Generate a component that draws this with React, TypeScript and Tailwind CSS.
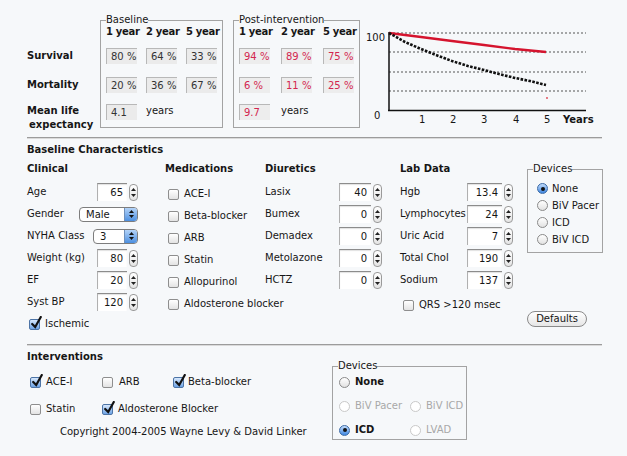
import React from "react";

function Checkbox({ checked = false }: { checked?: boolean }) {
  return (
    <span
      className={
        checked
          ? "relative shrink-0 inline-block w-[11px] h-[11px] rounded-[2px] border border-[#4d74a6] bg-linear-to-b from-[#d7e8fc] to-[#6ea3e4]"
          : "relative shrink-0 inline-block w-[11px] h-[11px] rounded-[2px] border border-[#8e8e8e] bg-linear-to-b from-white to-[#e3e3e3]"
      }
    >
      {checked && (
        <svg className="absolute left-[1px] top-[-4px]" width="11" height="13" viewBox="0 0 11 13">
          <path d="M1.2 8 L4.2 11 L9.8 1" stroke="#111" strokeWidth="2.2" fill="none" strokeLinecap="round" />
        </svg>
      )}
    </span>
  );
}

function Radio({ on = false, disabled = false }: { on?: boolean; disabled?: boolean }) {
  if (on)
    return (
      <span className="shrink-0 flex items-center justify-center w-[11px] h-[11px] rounded-full border border-[#3b6aa6] bg-linear-to-b from-[#c3dcfb] to-[#3c86e0]">
        <span className="w-[4px] h-[4px] rounded-full bg-[#111]" />
      </span>
    );
  if (disabled)
    return <span className="shrink-0 w-[11px] h-[11px] rounded-full border border-[#c9c9c9] bg-white" />;
  return <span className="shrink-0 w-[11px] h-[11px] rounded-full border border-[#8a8a8a] bg-linear-to-b from-white to-[#e2e2e2]" />;
}

function Stepper() {
  return (
    <span className="shrink-0 flex flex-col items-center justify-center gap-[3px] w-[9px] h-[17px] rounded-[4px] border border-[#9a9a9a] bg-linear-to-b from-white to-[#e4e4e4]">
      <svg width="5" height="3" viewBox="0 0 5 3">
        <path d="M0 3 L2.5 0 L5 3Z" fill="#222" />
      </svg>
      <svg width="5" height="3" viewBox="0 0 5 3">
        <path d="M0 0 L2.5 3 L5 0Z" fill="#222" />
      </svg>
    </span>
  );
}

function Spin({ value, w }: { value: string; w: string }) {
  return (
    <div className="flex items-center gap-[2px]">
      <span
        className={`${w} h-[18px] leading-[17px] text-right pr-[4px] bg-white border-t border-l border-t-[#8c8c8c] border-l-[#b0b0b0] shadow-[inset_0_1px_1px_rgba(0,0,0,0.12)]`}
      >
        {value}
      </span>
      <Stepper />
    </div>
  );
}

function Select({ value, w }: { value: string; w: string }) {
  return (
    <div className={`${w} flex h-[15px] rounded-[4px] border border-[#7d7d7d] bg-white overflow-hidden`}>
      <span className="flex-1 pl-[6px] leading-[13px]">{value}</span>
      <span className="w-[13px] flex flex-col items-center justify-center gap-[2px] bg-linear-to-b from-[#b3d3f8] to-[#4b8fe0] border-l border-[#6e8fba]">
        <svg width="5" height="3" viewBox="0 0 5 3">
          <path d="M0 3 L2.5 0 L5 3Z" fill="#111" />
        </svg>
        <svg width="5" height="3" viewBox="0 0 5 3">
          <path d="M0 0 L2.5 3 L5 0Z" fill="#111" />
        </svg>
      </span>
    </div>
  );
}

function Val({ v, red = false }: { v: string; red?: boolean }) {
  return (
    <span
      className={
        red
          ? "h-[16px] leading-[16px] pl-[4px] bg-[#ededed] border-t border-l border-[#b8b8b8] text-[#d3264f]"
          : "h-[16px] leading-[16px] pl-[4px] bg-[#ebebeb] border-t border-l border-[#b8b8b8] text-[#333]"
      }
    >
      {v}
    </span>
  );
}

function ResultBox({
  title,
  surv,
  mort,
  life,
  red = false,
  cols,
}: {
  title: string;
  surv: string[];
  mort: string[];
  life: string;
  red?: boolean;
  cols: string;
}) {
  return (
    <fieldset className="shrink-0 border border-[#a3a3a3] px-[5px] pb-[7px]">
      <legend className="leading-[12px]">{title}</legend>
      <div className={`grid ${cols} font-bold leading-[12px] tracking-[-0.3px] whitespace-nowrap`}>
        <span>1 year</span>
        <span>2 year</span>
        <span>5 year</span>
      </div>
      <div className={`mt-[10px] grid ${cols}`}>
        {surv.map((s) => (
          <Val key={s} v={s} red={red} />
        ))}
      </div>
      <div className={`mt-[13px] grid ${cols}`}>
        {mort.map((s) => (
          <Val key={s} v={s} red={red} />
        ))}
      </div>
      <div className={`mt-[11px] grid ${cols}`}>
        <Val v={life} red={red} />
        <span className="leading-[14px]">years</span>
      </div>
    </fieldset>
  );
}

function Chart() {
  const red = "29,19 61,23 92,27 124,31 155,35 186,38";
  const black = "29,19 45,28 61,35 76,41 92,47 108,52 124,56 139,60 155,64 170,67 186,71";
  return (
    <svg width="240" height="114" viewBox="0 0 240 114" className="shrink-0">
      {[19, 38, 58, 77].map((y) => (
        <line key={y} x1="29" y1={y} x2="226" y2={y} stroke="#555" strokeWidth="1" strokeDasharray="2 2" />
      ))}
      <line x1="29" y1="18" x2="29" y2="97" stroke="#111" strokeWidth="1.5" />
      <line x1="28" y1="96.5" x2="226" y2="96.5" stroke="#111" strokeWidth="1.5" />
      <polyline points={red} fill="none" stroke="#d5142e" strokeWidth="2.4" />
      <polyline points={black} fill="none" stroke="#111" strokeWidth="2.6" strokeDasharray="2.6 1.4" />
      <circle cx="187" cy="84" r="0.9" fill="#e04050" />
      <g fontFamily="'DejaVu Sans', sans-serif" fontSize="10" fill="#161616">
        <text x="6" y="27">100</text>
        <text x="14" y="105">0</text>
        <text x="59" y="109">1</text>
        <text x="90" y="109">2</text>
        <text x="121" y="109">3</text>
        <text x="153" y="109">4</text>
        <text x="184" y="109">5</text>
        <text x="203" y="109" fontWeight="bold">Years</text>
      </g>
    </svg>
  );
}

function Row({ children, className = "" }: { children: React.ReactNode; className?: string }) {
  return <div className={`h-[22px] flex items-center ${className}`}>{children}</div>;
}

export default function App() {
  const clinical: [string, React.ReactNode][] = [
    ["Age", <Spin value="65" w="w-[30px]" />],
    ["Gender", <Select value="Male" w="w-[59px]" />],
    ["NYHA Class", <Select value="3" w="w-[45px]" />],
    ["Weight (kg)", <Spin value="80" w="w-[30px]" />],
    ["EF", <Spin value="20" w="w-[30px]" />],
    ["Syst BP", <Spin value="120" w="w-[30px]" />],
  ];
  const meds = ["ACE-I", "Beta-blocker", "ARB", "Statin", "Allopurinol", "Aldosterone blocker"];
  const diuretics: [string, string][] = [
    ["Lasix", "40"],
    ["Bumex", "0"],
    ["Demadex", "0"],
    ["Metolazone", "0"],
    ["HCTZ", "0"],
  ];
  const lab: [string, string][] = [
    ["Hgb", "13.4"],
    ["Lymphocytes", "24"],
    ["Uric Acid", "7"],
    ["Total Chol", "190"],
    ["Sodium", "137"],
  ];

  return (
    <div className="w-[627px] h-[456px] overflow-hidden bg-[#f6f8fa] text-[#161616] text-[10px] leading-[12px] font-['DejaVu_Sans',sans-serif]">
      {/* Results */}
      <div className="flex pl-[27px] pt-[14px]">
        <div className="w-[73px] shrink-0 font-bold">
          <div className="h-[24px]" />
          <div className="mt-[10px] h-[16px] flex items-center">Survival</div>
          <div className="mt-[13px] h-[16px] flex items-center">Mortality</div>
          <div className="mt-[11px] h-[24px] leading-[14px]">
            Mean life
            <br />
            <span className="pl-[2px]">expectancy</span>
          </div>
        </div>
        <ResultBox
          title="Baseline"
          surv={["80 %", "64 %", "33 %"]}
          mort={["20 %", "36 %", "67 %"]}
          life="4.1"
          cols="grid-cols-[31px_31px_31px] gap-x-[9px]"
        />
        <div className="w-[10px] shrink-0" />
        <ResultBox
          title="Post-intervention"
          surv={["94 %", "89 %", "75 %"]}
          mort={["6 %", "11 %", "25 %"]}
          life="9.7"
          red
          cols="grid-cols-[31px_31px_31px] gap-x-[11px]"
        />
        <Chart />
      </div>

      <div className="ml-[27px] mt-[9px] w-[575px] h-[2px] border-t border-[#9c9c9c] bg-[#dadada]" />

      {/* Baseline characteristics */}
      <div className="ml-[27px] mt-[5px] font-bold">Baseline Characteristics</div>
      <div className="flex pl-[27px] mt-[7px]">
        <div className="w-[138px] shrink-0">
          <div className="font-bold">Clinical</div>
          <div className="mt-[6px]">
            {clinical.map(([l, c]) => (
              <Row key={l} className="w-[111px] justify-between">
                <span>{l}</span>
                {c}
              </Row>
            ))}
            <Row className="pl-[2px] gap-[5px]">
              <Checkbox checked />
              <span>Ischemic</span>
            </Row>
          </div>
        </div>

        <div className="w-[100px] shrink-0">
          <div className="font-bold">Medications</div>
          <div className="mt-[8px]">
            {meds.map((m) => (
              <Row key={m} className="pl-[3px] gap-[5px] whitespace-nowrap">
                <Checkbox />
                <span>{m}</span>
              </Row>
            ))}
          </div>
        </div>

        <div className="w-[135px] shrink-0">
          <div className="font-bold">Diuretics</div>
          <div className="mt-[6px]">
            {diuretics.map(([l, v]) => (
              <Row key={l} className="w-[117px] justify-between">
                <span>{l}</span>
                <Spin value={v} w="w-[32px]" />
              </Row>
            ))}
          </div>
        </div>

        <div className="w-[127px] shrink-0">
          <div className="font-bold">Lab Data</div>
          <div className="mt-[6px]">
            {lab.map(([l, v]) => (
              <Row key={l} className="w-[113px] justify-between">
                <span>{l}</span>
                <Spin value={v} w="w-[35px]" />
              </Row>
            ))}
            <Row className="mt-[3px] pl-[3px] gap-[5px]">
              <Checkbox />
              <span>QRS &gt;120 msec</span>
            </Row>
          </div>
        </div>

        <div className="w-[76px] shrink-0 flex flex-col items-start">
          <fieldset className="w-[76px] border border-[#a3a3a3] pl-[5px] pb-[4px]">
            <legend className="leading-[12px]">Devices</legend>
            <div className="mt-[5px] pl-[4px] flex flex-col">
              {[
                ["None", true],
                ["BiV Pacer", false],
                ["ICD", false],
                ["BiV ICD", false],
              ].map(([l, on]) => (
                <div key={l as string} className="h-[17px] flex items-center gap-[4px] whitespace-nowrap">
                  <Radio on={on as boolean} />
                  <span>{l as string}</span>
                </div>
              ))}
            </div>
          </fieldset>
          <button className="mt-[58px] w-[60px] h-[16px] rounded-full border border-[#8a8a8a] bg-linear-to-b from-white to-[#e6e6e6] text-[10px] leading-[14px]">
            Defaults
          </button>
        </div>
      </div>

      <div className="ml-[27px] mt-[9px] w-[575px] h-[2px] border-t border-[#9c9c9c] bg-[#dadada]" />

      {/* Interventions */}
      <div className="flex pl-[27px]">
        <div className="w-[305px] shrink-0">
          <div className="mt-[5px] font-bold">Interventions</div>
          <Row className="mt-[8px]">
            <div className="w-[75px] pl-[3px] flex items-center gap-[5px]">
              <Checkbox checked />
              <span>ACE-I</span>
            </div>
            <div className="w-[71px] flex items-center gap-[6px]">
              <Checkbox />
              <span>ARB</span>
            </div>
            <div className="flex items-center gap-[4px]">
              <Checkbox checked />
              <span>Beta-blocker</span>
            </div>
          </Row>
          <Row className="mt-[5px]">
            <div className="w-[75px] pl-[3px] flex items-center gap-[5px]">
              <Checkbox />
              <span>Statin</span>
            </div>
            <div className="flex items-center gap-[5px]">
              <Checkbox checked />
              <span>Aldosterone Blocker</span>
            </div>
          </Row>
          <div className="mt-[6px] pl-[33px] whitespace-nowrap">Copyright 2004-2005 Wayne Levy &amp; David Linker</div>
        </div>

        <fieldset className="mt-[14px] w-[135px] h-fit border border-[#a3a3a3] pl-[5px] pb-[1px]">
          <legend className="leading-[12px]">Devices</legend>
          <div className="mt-[2px] pl-[1px] grid grid-cols-[71px_1fr] gap-y-[8px]">
            <div className="h-[16px] flex items-center gap-[5px] font-bold">
              <Radio />
              <span>None</span>
            </div>
            <div />
            <div className="h-[16px] flex items-center gap-[5px] text-[#a8a8a8]">
              <Radio disabled />
              <span>BiV Pacer</span>
            </div>
            <div className="h-[16px] flex items-center gap-[5px] text-[#a8a8a8]">
              <Radio disabled />
              <span>BiV ICD</span>
            </div>
            <div className="h-[16px] flex items-center gap-[5px] font-bold">
              <Radio on />
              <span>ICD</span>
            </div>
            <div className="h-[16px] flex items-center gap-[5px] text-[#a8a8a8]">
              <Radio disabled />
              <span>LVAD</span>
            </div>
          </div>
        </fieldset>
      </div>
    </div>
  );
}
